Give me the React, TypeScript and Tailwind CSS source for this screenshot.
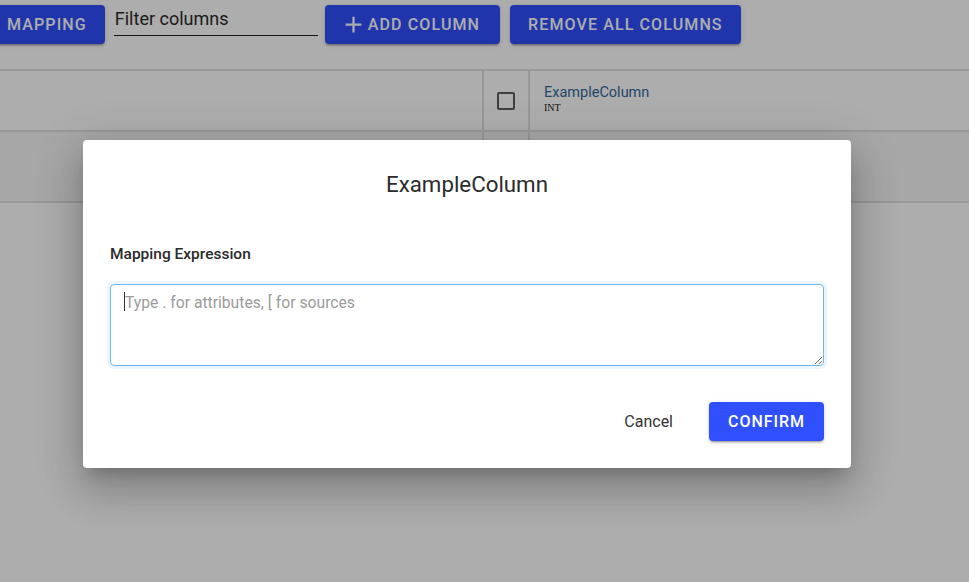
import React from 'react';

const font = { fontFamily: 'Roboto, "Liberation Sans", sans-serif' };

const AddIcon = () => (
  <svg viewBox="0 0 24 24" className="h-[27px] w-[27px] -ml-[4px] mr-[1px]" fill="currentColor">
    <path d="M19 13h-6v6h-2v-6H5v-2h6V5h2v6h6v2z" />
  </svg>
);

const ToolbarButton = ({ children, className = '' }: { children: React.ReactNode; className?: string }) => (
  <button
    className={`flex h-[39px] items-center rounded-[4px] bg-[#304ffe] px-[18px] text-[16px] font-medium uppercase tracking-[0.07em] text-white shadow-[0_3px_1px_-2px_rgba(0,0,0,0.2),0_2px_2px_0_rgba(0,0,0,0.14),0_1px_5px_0_rgba(0,0,0,0.12)] ${className}`}
  >
    {children}
  </button>
);

export default function App() {
  return (
    <div className="relative h-[582px] w-[969px] overflow-hidden bg-white" style={font}>
      {/* toolbar */}
      <div className="flex items-start pt-[5px]">
        <ToolbarButton className="-ml-[11px]">Mapping</ToolbarButton>
        <div className="ml-[9px] w-[204px] border-b border-[#222] pb-[5px] pt-[2px]">
          <span className="block pl-[1px] text-[18px] leading-[23px] text-[#2a2a2a]">Filter columns</span>
        </div>
        <ToolbarButton className="ml-[7px] !pl-[19px] !pr-[20px]">
          <AddIcon />
          Add Column
        </ToolbarButton>
        <ToolbarButton className="ml-[10px]">Remove All Columns</ToolbarButton>
      </div>

      {/* table */}
      <div className="mt-[25px] border-t-2 border-[#e0e0e0]">
        <div className="flex h-[61px] border-b-2 border-[#e0e0e0]">
          <div className="w-[484px] border-r-2 border-[#e0e0e0]" />
          <div className="flex w-[46px] items-center justify-center border-r-2 border-[#e0e0e0]">
            <div className="h-[18px] w-[18px] rounded-[2px] border-2 border-[#5f5f5f]" />
          </div>
          <div className="flex flex-col pl-[14px] pt-[13px]">
            <span className="text-[14.5px] leading-[18px] text-[#33689c]">ExampleColumn</span>
            <span className="text-[10px] leading-[11px] text-[#222]" style={{ fontFamily: '"Liberation Serif", serif' }}>
              INT
            </span>
          </div>
        </div>
        <div className="flex h-[71px] border-b-2 border-[#e0e0e0] bg-[#f6f6f6]">
          <div className="w-[484px] border-r-2 border-[#e0e0e0]" />
          <div className="w-[46px] border-r-2 border-[#e0e0e0]" />
        </div>
      </div>

      {/* dialog */}
      <div className="absolute inset-0 bg-black/[0.32]">
        <div className="ml-[83px] mt-[140px] flex w-[768px] flex-col rounded-[4px] bg-white px-[27px] pb-[27px] pt-[30px] shadow-[0_11px_15px_-7px_rgba(0,0,0,0.2),0_24px_38px_3px_rgba(0,0,0,0.14),0_9px_46px_8px_rgba(0,0,0,0.12)]">
          <h2 className="text-center text-[22.3px] leading-[28px] text-[#2b2b2b]">ExampleColumn</h2>
          <label className="mt-[46px] text-[15.5px] font-medium leading-[20px] text-[#2a2a2a]">Mapping Expression</label>
          <div className="relative mt-[20px]">
            <textarea
              placeholder="Type . for attributes, [ for sources"
              className="block h-[82px] w-full rounded-[4px] border border-[#6fb6f2] px-[14px] py-[7px] text-[15.7px] leading-[22px] text-[#333] shadow-[0_0_0_3px_rgba(100,170,240,0.12)] outline-none placeholder:text-[#9b9b9b]"
              style={font}
            />
            <span className="absolute left-[14px] top-[8px] h-[19px] w-px bg-[#333]" />
          </div>
          <div className="mt-[36px] flex items-center justify-end">
            <button className="h-[39px] px-[18px] text-[16px] text-[#333]">Cancel</button>
            <button className="ml-[18px] h-[39px] w-[115px] rounded-[4px] bg-[#304ffe] text-[16px] font-medium uppercase tracking-[0.06em] text-white shadow-[0_3px_1px_-2px_rgba(0,0,0,0.2),0_2px_2px_0_rgba(0,0,0,0.14),0_1px_5px_0_rgba(0,0,0,0.12)]">
              Confirm
            </button>
          </div>
        </div>
      </div>
    </div>
  );
}
